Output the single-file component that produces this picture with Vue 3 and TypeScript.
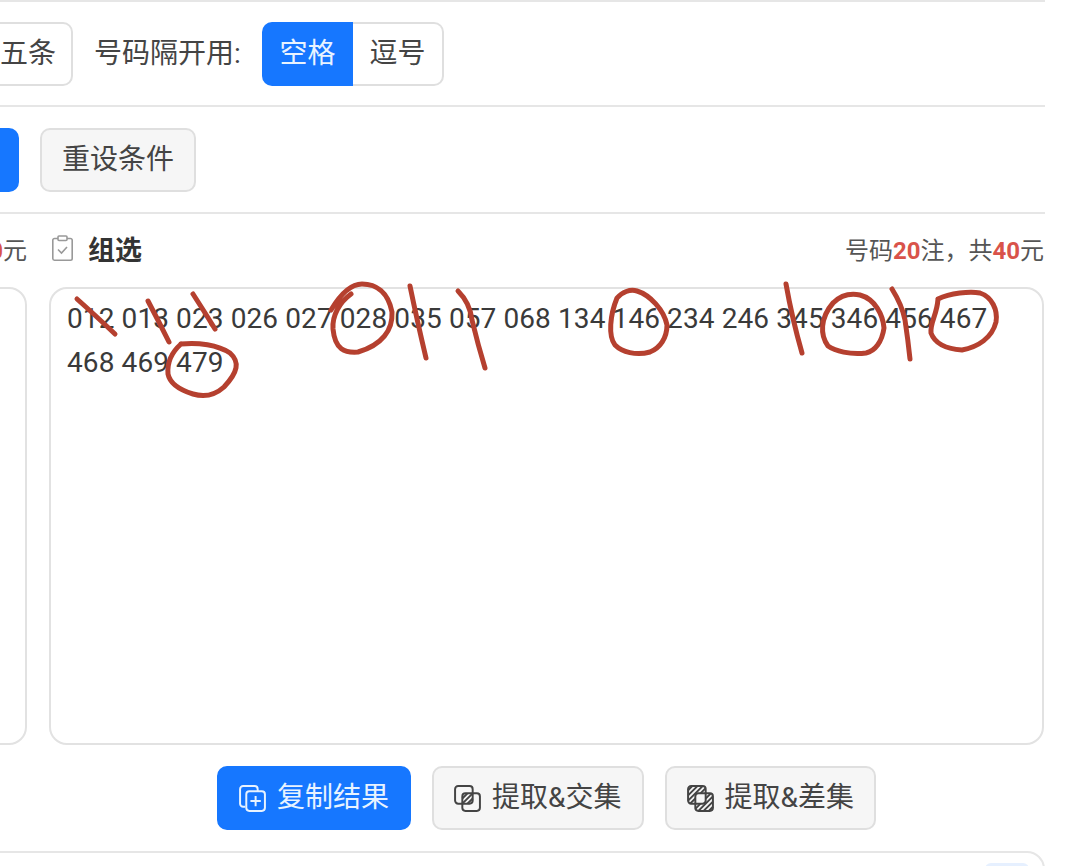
<script setup lang="ts">
const numbers =
  '012 013 023 026 027 028 035 057 068 134 146 234 246 345 346 456 467 468 469 479'

const strokes: string[] = [
  'M77 299 Q95 315 115 334',
  'M148 301 Q158 320 169 342',
  'M193 294 Q204 311 215 329',
  'M331 310 C340 295 350 284 362 284 C376 284 388 292 392 312 C393 330 382 345 358 352 C345 353 335 350 333 329 C332 315 340 302 351 294',
  'M410 286 Q417 320 426 358',
  'M458 291 Q470 303 472 320 Q478 345 485 368',
  'M181 344 C198 342 218 345 230 353 C240 362 238 372 224 387 C214 396 203 397 193 394 C180 390 170 384 168 374 C167 362 172 352 181 344',
  'M617 298 C622 292 630 289 637 291 C650 295 664 310 667 325 C667 338 660 348 650 352 C636 356 622 352 615 345 C608 336 610 315 617 298',
  'M786 284 Q792 318 802 353',
  'M833 303 C840 296 850 293 860 295 C875 299 883 315 884 328 C882 342 875 351 866 353 C850 355 835 351 828 346 C820 335 820 318 833 303',
  'M892 289 Q902 305 905 320 Q908 340 910 359',
  'M938 299 C950 293 970 291 980 293 C992 297 998 310 996 322 C992 338 978 347 962 350 C948 349 935 344 931 333 C930 322 937 315 938 299'
]
</script>

<template>
  <div class="viewport">
    <div class="page">
      <section class="row row-options">
        <button class="btn btn-first">五条</button>
        <span class="option-label">号码隔开用:</span>
        <div class="segmented">
          <button class="seg seg-on">空格</button>
          <button class="seg">逗号</button>
        </div>
      </section>

      <section class="row row-actions">
        <button class="btn btn-primary btn-offscreen" aria-hidden="true"></button>
        <button class="btn btn-muted">重设条件</button>
      </section>

      <section class="results">
        <div class="col">
          <header class="col-head">
            <span></span>
            <span class="summary"><b>0</b>元</span>
          </header>
          <div class="box"></div>
        </div>
        <div class="col">
          <header class="col-head">
            <span class="title">
              <svg class="clip" viewBox="0 0 21 26" fill="none" stroke="#999" stroke-width="1.6">
                <path d="M6 3.500H2.500A1.700 1.700 0 0 0 .8 5.200v18.300a1.700 1.700 0 0 0 1.700 1.700h16a1.700 1.700 0 0 0 1.700-1.700V5.200a1.700 1.700 0 0 0-1.700-1.700H15" />
                <rect x="6" y="1" width="9" height="4.500" rx="1" />
                <path d="M6 14.500l3.500 3.500 5.500-6" />
              </svg>
              组选
            </span>
            <span class="summary">号码<b>20</b>注，共<b>40</b>元</span>
          </header>
          <div class="box box-text">{{ numbers }}</div>
          <div class="tools">
            <button class="btn btn-primary btn-tool">
              <svg class="tool-icon" viewBox="0 0 28 28" fill="none" stroke="currentColor" stroke-width="1.9">
                <path d="M7 22H5a3 3 0 0 1-3-3V5a3 3 0 0 1 3-3h11a3 3 0 0 1 3 3v2" />
                <rect x="8" y="7" width="18" height="19" rx="3" />
                <path d="M17 11.500v10M12 16.500h10" />
              </svg>
              复制结果
            </button>
            <button class="btn btn-muted btn-tool">
              <svg class="tool-icon" viewBox="0 0 28 28" fill="none" stroke="currentColor" stroke-width="1.9">
                <rect x="2" y="2" width="17" height="17" rx="3" />
                <rect x="9" y="9" width="17" height="17" rx="3" />
                <path d="M9 14l5-5M9 19L19 9M14 19l5-5" />
              </svg>
              提取&amp;交集
            </button>
            <button class="btn btn-muted btn-tool">
              <svg class="tool-icon" viewBox="0 0 28 28" fill="none" stroke="currentColor" stroke-width="1.9">
                <rect x="2" y="2" width="17" height="17" rx="3" />
                <rect x="9" y="9" width="17" height="17" rx="3" />
                <path d="M2 6l4-4M2 11l9-9M2 16L16 2M4 19l5-5M14 9l5-5M9 24l5-5M19 14l5-5M12 26l14-14M17 26l9-9M22 26l4-4" />
              </svg>
              提取&amp;差集
            </button>
          </div>
        </div>
      </section>

      <section class="next-card">
        <span class="next-tag"></span>
      </section>
    </div>

    <svg class="marks" viewBox="0 0 1080 866" fill="none" stroke="#b5402f" stroke-width="5" stroke-linecap="round" stroke-linejoin="round">
      <path v-for="(d, i) in strokes" :key="i" :d="d" />
    </svg>
  </div>
</template>

<style>
html,
body {
  margin: 0;
  background: #fff;
}
</style>

<style scoped>
.viewport {
  position: relative;
  width: 1080px;
  height: 866px;
  overflow: hidden;
  background: #fff;
  color: #333;
  font-family: Roboto, "Noto Sans CJK SC", sans-serif;
  font-size: 28px;
}
.page {
  box-sizing: border-box;
  width: 1205px;
  margin-left: -160px;
  border-top: 2px solid #e6e6e6;
}
.row {
  display: flex;
  align-items: center;
  box-sizing: border-box;
  border-bottom: 2px solid #e6e6e6;
}
.row-options {
  height: 105px;
  padding-left: 143px;
}
.row-actions {
  height: 107px;
  padding: 1px 0 0 23px;
  gap: 21px;
}
.btn {
  box-sizing: border-box;
  height: 64px;
  padding: 0 20px;
  border: 2px solid #dfdfdf;
  border-radius: 10px;
  background: #fff;
  color: #444;
  font: inherit;
  line-height: 1;
}
.btn-first {
  padding: 0 15px;
}
.btn-offscreen {
  width: 156px;
}
.btn-primary {
  border-color: #1677ff;
  background: #1677ff;
  color: #e8f3ff;
}
.btn-muted {
  background: #f6f6f6;
}
.option-label {
  margin-left: 21px;
  width: 168px;
  color: #444;
  line-height: 1;
  white-space: nowrap;
}
.segmented {
  display: flex;
}
.seg {
  box-sizing: border-box;
  width: 91px;
  height: 64px;
  padding: 0;
  border: 2px solid #dfdfdf;
  border-left: 0;
  border-radius: 0 10px 10px 0;
  background: #fff;
  color: #444;
  font: inherit;
  line-height: 1;
}
.seg-on {
  border: 0;
  border-radius: 10px 0 0 10px;
  background: #1677ff;
  color: #e8f3ff;
}
.results {
  display: grid;
  grid-template-columns: 187px 995px;
  column-gap: 22px;
}
.col {
  display: flex;
  flex-direction: column;
}
.col-head {
  display: flex;
  align-items: center;
  justify-content: space-between;
  box-sizing: border-box;
  height: 73px;
  padding-bottom: 5px;
}
.title {
  display: flex;
  align-items: center;
  gap: 15px;
  font-weight: 700;
  font-size: 27px;
}
.clip {
  width: 21px;
  height: 26px;
  margin-left: 3px;
}
.summary {
  color: #555;
  font-size: 24px;
}
.summary b {
  color: #d9534a;
  font-weight: 700;
}
.box {
  box-sizing: border-box;
  height: 458px;
  border: 2px solid #e2e2e2;
  border-radius: 18px;
  background: #fff;
}
.box-text {
  padding: 8px 16px;
  line-height: 44px;
  letter-spacing: 0.1px;
  color: #3a3a3a;
}
.tools {
  display: flex;
  justify-content: center;
  gap: 21px;
  padding: 21px 0;
}
.btn-tool {
  display: flex;
  align-items: center;
  gap: 10px;
}
.tool-icon {
  width: 29px;
  height: 29px;
  margin-left: -1px;
}
.next-card {
  display: flex;
  justify-content: flex-end;
  box-sizing: border-box;
  height: 60px;
  padding: 10px 14px 0;
  border: 2px solid #e6e6e6;
  border-radius: 18px;
}
.next-tag {
  width: 44px;
  height: 40px;
  border-radius: 6px;
  background: #e6f0ff;
}
.marks {
  position: absolute;
  inset: 0;
  width: 1080px;
  height: 866px;
  pointer-events: none;
}
</style>
